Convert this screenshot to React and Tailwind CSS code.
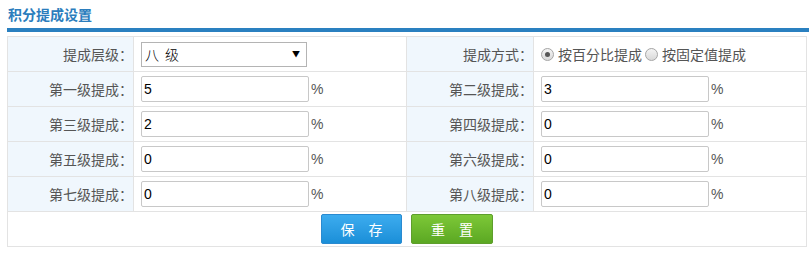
import { useState } from 'react'

const levels = ['一', '二', '三', '四', '五', '六', '七', '八']

function Radio({ checked, label, onClick }) {
  return (
    <label onClick={onClick} className="flex items-center cursor-pointer">
      <span className="w-[13px] h-[13px] rounded-full border border-[#a6a6a6] bg-gradient-to-b from-[#f4f4f4] to-[#d8d8d8] flex items-center justify-center mr-[4px]">
        {checked && <span className="w-[5px] h-[5px] rounded-full bg-[#555]" />}
      </span>
      <span>{label}</span>
    </label>
  )
}

function RateInput({ value, onChange }) {
  return (
    <div className="flex items-center">
      <input
        value={value}
        onChange={(e) => onChange(e.target.value)}
        className="w-[168px] h-[26px] border border-[#c8c8c8] rounded-[2px] bg-white pl-[2px] text-[14px] text-black font-['Liberation_Sans',Arial,sans-serif] outline-none"
      />
      <span className="ml-[2px] text-[14px] text-[#555] font-['Liberation_Sans',Arial,sans-serif]">%</span>
    </div>
  )
}

export default function App() {
  const [mode, setMode] = useState('percent')
  const [rates, setRates] = useState(['5', '3', '2', '0', '0', '0', '0', '0'])

  const setRate = (i, v) => {
    const next = [...rates]
    next[i] = v
    setRates(next)
  }

  const label = 'bg-[#f0f7fd] text-right pr-[0px] text-[#555]'
  const cell = 'border border-[#e3e3e3] p-0'

  const rows = []
  for (let i = 0; i < 8; i += 2) {
    rows.push(
      <tr key={i} className="h-[35px]">
        <td className={`${cell} ${label}`}>第{levels[i]}级提成：</td>
        <td className={`${cell} pl-[7px]`}>
          <RateInput value={rates[i]} onChange={(v) => setRate(i, v)} />
        </td>
        <td className={`${cell} ${label}`}>第{levels[i + 1]}级提成：</td>
        <td className={`${cell} pl-[7px]`}>
          <RateInput value={rates[i + 1]} onChange={(v) => setRate(i + 1, v)} />
        </td>
      </tr>
    )
  }

  return (
    <div className="w-[809px] h-[255px] bg-white pl-[7px] font-['Noto_Sans_CJK_SC',sans-serif] text-[14px]">
      <div className="h-[28px] flex items-center pl-[1px] text-[14px] font-bold text-[#2b7dbd]">
        积分提成设置
      </div>
      <div className="h-[4px] bg-[#2a80c0]" />
      <table className="mt-[4px] w-[800px] border-collapse table-fixed">
        <colgroup>
          <col className="w-[126px]" />
          <col className="w-[273px]" />
          <col className="w-[127px]" />
          <col />
        </colgroup>
        <tbody>
          <tr className="h-[35px]">
            <td className={`${cell} ${label}`}>提成层级：</td>
            <td className={`${cell} pl-[7px]`}>
              <div className="relative w-[166px] h-[25px] border border-[#b4b4b4] bg-white flex items-center pl-[3px] text-[14px] text-black font-light">
                <span className="tracking-[6px]">八级</span>
                <span className="absolute right-[6px] top-[7px] text-[8px] leading-none">▼</span>
              </div>
            </td>
            <td className={`${cell} ${label}`}>提成方式：</td>
            <td className={`${cell} pl-[7px] text-[#555]`}>
              <div className="flex items-center gap-[3px]">
                <Radio checked={mode === 'percent'} label="按百分比提成" onClick={() => setMode('percent')} />
                <Radio checked={mode === 'fixed'} label="按固定值提成" onClick={() => setMode('fixed')} />
              </div>
            </td>
          </tr>
          {rows}
          <tr className="h-[35px]">
            <td colSpan={4} className={cell}>
              <div className="flex justify-center gap-[9px]">
                <button className="w-[81px] h-[30px] rounded-[2px] border border-[#2a8ad0] bg-gradient-to-b from-[#3cacef] to-[#1a8fd8] text-white text-[14px] tracking-[14px] pl-[14px]">
                  保存
                </button>
                <button className="w-[82px] h-[30px] rounded-[2px] border border-[#5e9e2c] bg-gradient-to-b from-[#7dc837] to-[#5ba823] text-white text-[14px] tracking-[14px] pl-[14px]">
                  重置
                </button>
              </div>
            </td>
          </tr>
        </tbody>
      </table>
    </div>
  )
}
